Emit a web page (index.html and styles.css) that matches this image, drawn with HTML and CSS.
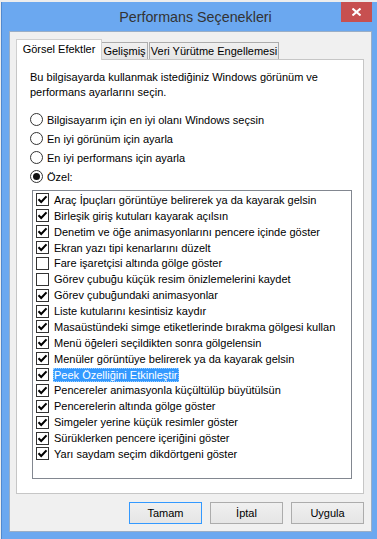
FILE: index.html
```html
<!DOCTYPE html>
<html lang="tr">
<head>
<meta charset="UTF-8" />
<meta name="viewport" content="width=device-width, initial-scale=1" />
<title>Performans Seçenekleri</title>
<link rel="stylesheet" href="styles.css">
</head>
<body>
<div class="window">
  <div class="titlebar">
    <span class="title">Performans Seçenekleri</span>
    <button class="close" aria-label="Kapat">
      <svg width="9" height="8" viewBox="0 0 9 8"><path d="M0.5 0.5 L8.5 7.5 M8.5 0.5 L0.5 7.5" stroke="#fff" stroke-width="2" fill="none"/></svg>
    </button>
  </div>

  <div class="client">
    <div class="tabs">
      <div class="tab active">Görsel Efektler</div>
      <div class="tab second">Gelişmiş</div>
      <div class="tab third">Veri Yürütme Engellemesi</div>
    </div>

    <div class="panel">
      <p class="intro">Bu bilgisayarda kullanmak istediğiniz Windows görünüm ve performans ayarlarını seçin.</p>

      <div class="radios">
        <label class="radio"><span class="dot"></span>Bilgisayarım için en iyi olanı Windows seçsin</label>
        <label class="radio"><span class="dot"></span>En iyi görünüm için ayarla</label>
        <label class="radio"><span class="dot"></span>En iyi performans için ayarla</label>
        <label class="radio"><span class="dot on"></span>Özel:</label>
      </div>

      <ul class="effects">
        <li><span class="box on"></span><span class="text">Araç İpuçları görüntüye belirerek ya da kayarak gelsin</span></li>
        <li><span class="box on"></span><span class="text">Birleşik giriş kutuları kayarak açılsın</span></li>
        <li><span class="box on"></span><span class="text">Denetim ve öğe animasyonlarını pencere içinde göster</span></li>
        <li><span class="box on"></span><span class="text">Ekran yazı tipi kenarlarını düzelt</span></li>
        <li><span class="box"></span><span class="text">Fare işaretçisi altında gölge göster</span></li>
        <li><span class="box"></span><span class="text">Görev çubuğu küçük resim önizlemelerini kaydet</span></li>
        <li><span class="box on"></span><span class="text">Görev çubuğundaki animasyonlar</span></li>
        <li><span class="box on"></span><span class="text">Liste kutularını kesintisiz kaydır</span></li>
        <li><span class="box on"></span><span class="text">Masaüstündeki simge etiketlerinde bırakma gölgesi kullan</span></li>
        <li><span class="box on"></span><span class="text">Menü öğeleri seçildikten sonra gölgelensin</span></li>
        <li><span class="box on"></span><span class="text">Menüler görüntüye belirerek ya da kayarak gelsin</span></li>
        <li><span class="box on"></span><span class="text selected">Peek Özelliğini Etkinleştir</span></li>
        <li><span class="box on"></span><span class="text">Pencereler animasyonla küçültülüp büyütülsün</span></li>
        <li><span class="box on"></span><span class="text">Pencerelerin altında gölge göster</span></li>
        <li><span class="box on"></span><span class="text">Simgeler yerine küçük resimler göster</span></li>
        <li><span class="box on"></span><span class="text">Sürüklerken pencere içeriğini göster</span></li>
        <li><span class="box on"></span><span class="text">Yarı saydam seçim dikdörtgeni göster</span></li>
      </ul>
    </div>

    <div class="buttons">
      <button class="btn default">Tamam</button>
      <button class="btn">İptal</button>
      <button class="btn">Uygula</button>
    </div>
  </div>
</div>
</body>
</html>
```

FILE: styles.css
```css
:root {
  --frame-color: #6ba8f0;
  --face-color: #f0f0f0;
  --ui-font: 'Liberation Sans', Arial, sans-serif;
}

* {
  box-sizing: border-box;
}

body {
  margin: 0;
  background: #ededed;
  font-family: var(--ui-font);
  font-size: 11px;
  color: #000;
  height: 539px;
  overflow: hidden;
}

.window {
  margin: 2px 0 0 1px;
  width: 376px;
  height: 537px;
  background: var(--frame-color);
  border-left: 1px solid #5189cf;
  padding: 0 5px 7px 7px;
}

.titlebar {
  height: 29px;
  display: grid;
  grid-template-columns: 1fr auto 1fr;
  align-items: start;
}

.title {
  grid-column: 2;
  align-self: center;
  font-size: 14.3px;
  color: #333;
  margin-left: 10px;
}

.close {
  grid-column: 3;
  justify-self: end;
  width: 31px;
  height: 20px;
  border: none;
  padding: 0;
  margin: 0;
  background: #c75050;
  display: flex;
  align-items: center;
  justify-content: center;
}

.client {
  height: 501px;
  background: var(--face-color);
  border: 1px solid #9aaec6;
  padding: 7px 7px 7px 6px;
}

/* tabs */
.tabs {
  display: flex;
  align-items: flex-end;
  height: 20px;
}

.tab {
  height: 17px;
  border: 1px solid #acacac;
  border-bottom: none;
  background: linear-gradient(#f0f0f0, #e5e5e5);
  text-align: center;
  line-height: 16px;
  white-space: nowrap;
}

.tab.active {
  position: relative;
  z-index: 1;
  width: 86px;
  height: 21px;
  margin-bottom: -1px;
  background: #fff;
  border-color: #d0d0d0;
  line-height: 19px;
}

.tab.second {
  width: 46px;
  border-left: none;
}

.tab.third {
  width: 130px;
  margin-left: 1px;
}

.panel {
  height: 435px;
  background: #fff;
  border: 1px solid #c6c6c6;
  padding: 10px 12px 0 13px;
}

.intro {
  margin: 0;
  line-height: 15px;
  width: 300px;
}

.radios {
  margin-top: 10px;
  display: flex;
  flex-direction: column;
}

.radio {
  height: 19px;
  display: flex;
  align-items: center;
  gap: 4px;
}

.dot {
  width: 13px;
  height: 13px;
  border: 1px solid #333;
  border-radius: 50%;
  background: #fff;
  display: flex;
  align-items: center;
  justify-content: center;
}

.dot.on::after {
  content: "";
  width: 7px;
  height: 7px;
  border-radius: 50%;
  background: #111;
}

/* list view */
.effects {
  list-style: none;
  margin: 4px 0 0 2px;
  padding: 1px 0 0 3px;
  width: 320px;
  height: 289px;
  border: 1px solid #828790;
}

.effects li {
  height: 15.875px;
  display: flex;
  align-items: center;
  gap: 4px;
}

.box {
  width: 13px;
  height: 13px;
  border: 1px solid #333;
  background: #fff;
  flex: none;
}

.box.on {
  background: #fff url("data:image/svg+xml,%3Csvg xmlns='http://www.w3.org/2000/svg' width='11' height='11' viewBox='0 0 11 11'%3E%3Cpath d='M1.5 5.3 L4.2 8 L9.5 2.4' stroke='%23000' stroke-width='2.1' fill='none'/%3E%3C/svg%3E") center / 11px 11px no-repeat;
}

.text {
  line-height: 14px;
  padding: 0 1px;
  white-space: nowrap;
}

.text.selected {
  background: #3399ff;
  color: #fff;
  outline: 1px dotted #9fd0ff;
  outline-offset: -1px;
}

/* dialog buttons */
.buttons {
  margin-top: 8px;
  display: flex;
  justify-content: flex-end;
  gap: 8px;
}

.btn {
  width: 73px;
  height: 22px;
  border: 1px solid #acacac;
  background: linear-gradient(#f0f0f0, #e5e5e5);
  font-family: var(--ui-font);
  font-size: 11px;
  color: #000;
  padding: 0;
}

.btn.default {
  border-color: #3399ff;
}
```
